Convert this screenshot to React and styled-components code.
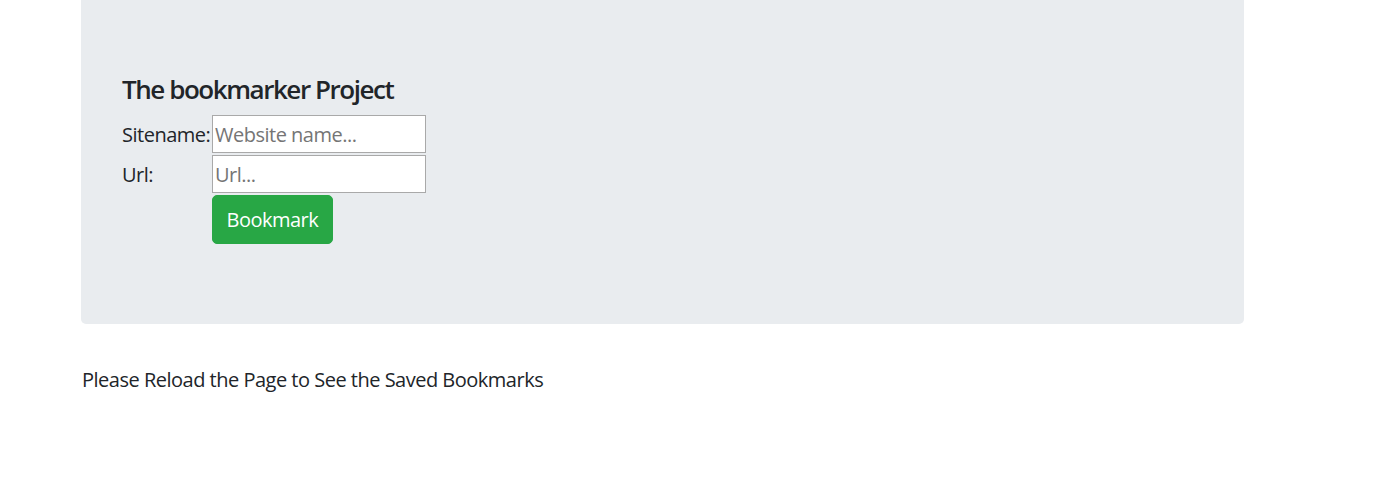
import styled, { createGlobalStyle } from 'styled-components';

const GlobalStyle = createGlobalStyle`
  html, body {
    margin: 0;
    padding: 0;
    background: #fff;
  }
  body {
    font-family: 'Open Sans', 'Noto Sans', sans-serif;
    font-size: 20px;
    line-height: 1.5;
    letter-spacing: -0.5px;
    color: #212529;
  }
`;

const Page = styled.div`
  width: 1163px;
  margin-left: 81px;
`;

const Jumbotron = styled.div`
  background: #e9ecef;
  border-radius: 0 0 5px 5px;
  padding: 74px 41px 80px;
  margin-bottom: 40px;
`;

const Title = styled.h4`
  margin: 0 0 10px;
  font-size: 26px;
  font-weight: 600;
  letter-spacing: -1.45px;
  line-height: 1.2;
  color: #212529;
`;

const Form = styled.form`
  display: flex;
  flex-direction: column;
  gap: 2px;
`;

const Row = styled.div`
  display: flex;
  align-items: center;
`;

const Label = styled.label`
  width: 90px;
  flex-shrink: 0;
  padding-top: 1px;
`;

const Input = styled.input`
  box-sizing: border-box;
  width: 214px;
  height: 38px;
  padding: 1px 2px;
  border: 1px solid #a9a9a9;
  font-family: inherit;
  font-size: 20px;
  letter-spacing: -0.5px;
  color: #212529;
  background: #fff;
  outline: none;

  &::placeholder {
    color: #757575;
  }
`;

const Button = styled.button`
  margin-left: 90px;
  padding: 8.5px 13.5px;
  border: 1px solid #28a745;
  border-radius: 5px;
  background: #28a745;
  color: #fff;
  font-family: inherit;
  font-size: 20px;
  letter-spacing: -0.5px;
  line-height: 1.5;
  cursor: pointer;
`;

const Note = styled.p`
  margin: 0;
  padding: 1px 0 0 1px;
`;

export default function App() {
  return (
    <>
      <GlobalStyle />
      <Page>
        <Jumbotron>
          <Title>The bookmarker Project</Title>
          <Form onSubmit={(e) => e.preventDefault()}>
            <Row>
              <Label htmlFor="site">Sitename:</Label>
              <Input id="site" type="text" placeholder="Website name..." />
            </Row>
            <Row>
              <Label htmlFor="url">Url:</Label>
              <Input id="url" type="text" placeholder="Url..." />
            </Row>
            <Row>
              <Button type="submit">Bookmark</Button>
            </Row>
          </Form>
        </Jumbotron>
        <Note>Please Reload the Page to See the Saved Bookmarks</Note>
      </Page>
    </>
  );
}
